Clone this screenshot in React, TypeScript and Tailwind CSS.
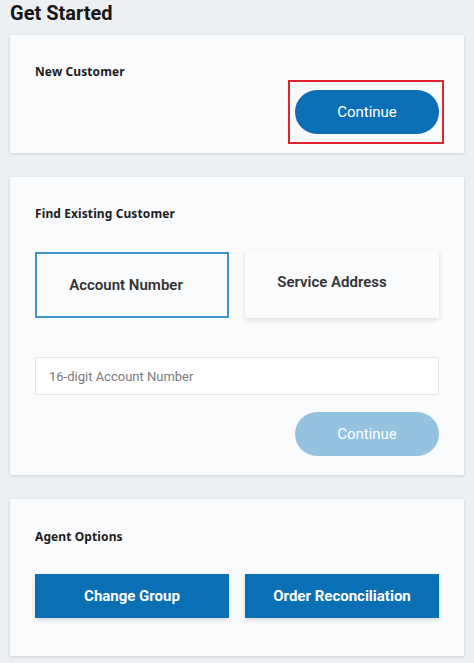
import React from 'react';

const font = { fontFamily: 'Roboto, "Noto Sans", sans-serif' };
const titleFont = { fontFamily: '"Noto Sans", "Open Sans", sans-serif' };

function Card({ title, className, children }: { title: string; className: string; children: React.ReactNode }) {
  return (
    <section className={`bg-[#fafbfc] px-[25px] shadow-[0_1px_3px_rgba(0,0,0,0.14)] ${className}`}>
      <h2 style={titleFont} className="text-[12px] font-bold leading-[16px] tracking-[0.1px] text-[#1c1c1c]">
        {title}
      </h2>
      {children}
    </section>
  );
}

export default function App() {
  return (
    <div style={font} className="min-h-screen w-[474px] overflow-hidden bg-[#edf0f3] px-[10px]">
      <h1 className="pt-px text-[20px] font-bold leading-[24px] text-[#161616]">Get Started</h1>

      <div className="mt-[10px] flex flex-col gap-[24px]">
        <Card title="New Customer" className="pt-[29px] pb-[19px]">
          <div className="mt-[10px] flex justify-end">
            <div className="relative">
              <button className="h-[44px] w-[144px] rounded-full bg-[#0a6fb4] text-[15px] text-white">
                Continue
              </button>
              {/* highlight box drawn over the button */}
              <span className="absolute -left-[7px] -top-[10px] -right-[5px] -bottom-[10px] border-2 border-[#e0232d]" />
            </div>
          </div>
        </Card>

        <Card title="Find Existing Customer" className="pt-[29px] pb-[19px]">
          <div className="mt-[30px] grid grid-cols-2 gap-[16px]">
            <button className="h-[66px] border-2 border-[#3f95c8] bg-[#fafcfd] pr-[12px] text-[15px] font-semibold text-[#333]">
              Account Number
            </button>
            <button className="-mt-[2px] h-[68px] bg-[#fafbfc] pr-[20px] pb-[4px] text-[15px] font-semibold text-[#333] shadow-[0_2px_5px_rgba(0,0,0,0.12)]">
              Service Address
            </button>
          </div>
          <input
            placeholder="16-digit Account Number"
            className="mt-[39px] block h-[38px] w-full border border-[#e3e6e9] bg-white px-[13px] text-[13px] placeholder:text-[#7a7a7a]"
          />
          <div className="mt-[17px] flex justify-end">
            <button disabled className="h-[44px] w-[144px] rounded-full bg-[#94c2df] text-[15px] text-white">
              Continue
            </button>
          </div>
        </Card>

        <Card title="Agent Options" className="pt-[30px] pb-[38px]">
          <div className="mt-[29px] grid grid-cols-2 gap-[16px]">
            <button className="h-[44px] bg-[#0a6fb4] text-[15px] font-bold text-white shadow-[0_2px_5px_rgba(0,0,0,0.15)]">
              Change Group
            </button>
            <button className="h-[44px] bg-[#0a6fb4] text-[15px] font-bold text-white shadow-[0_2px_5px_rgba(0,0,0,0.15)]">
              Order Reconciliation
            </button>
          </div>
        </Card>
      </div>
    </div>
  );
}
